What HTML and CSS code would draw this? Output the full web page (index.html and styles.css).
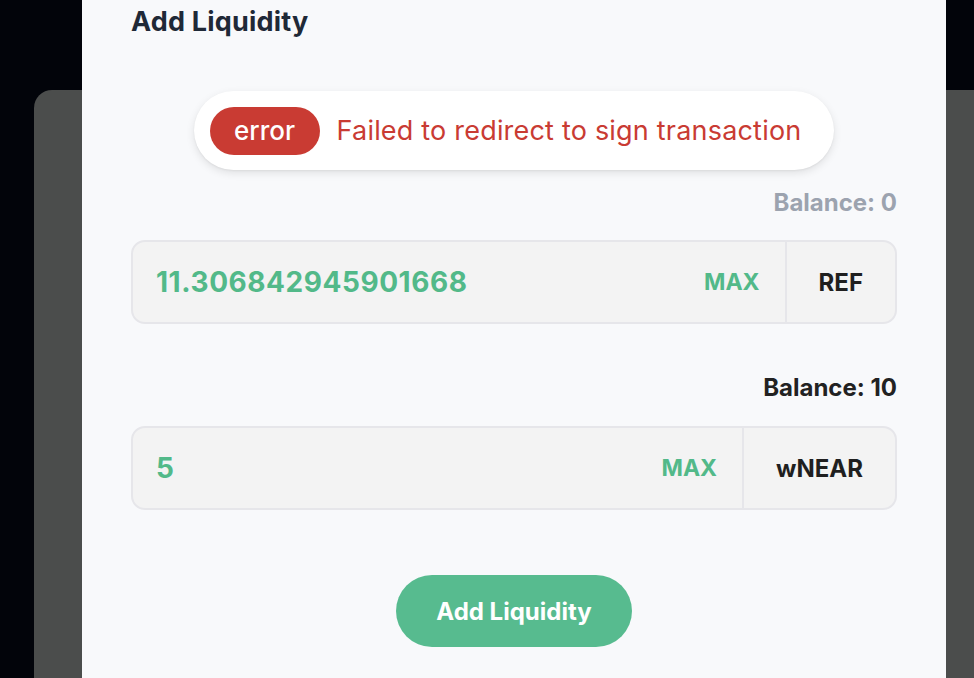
FILE: index.html
```html
<!DOCTYPE html>
<html lang="en">
<head>
<meta charset="utf-8">
<title>Add Liquidity</title>
<link rel="stylesheet" href="styles.css">
</head>
<body>
  <div class="backdrop-panel"></div>
  <div class="modal">
    <h2 class="title">Add Liquidity</h2>
    <div class="toast">
      <span class="toast-badge">error</span>
      <span class="toast-msg">Failed to redirect to sign transaction</span>
    </div>
    <div class="balance muted">Balance: 0</div>
    <div class="field">
      <span class="amount">11.306842945901668</span>
      <span class="max">MAX</span>
      <span class="token">REF</span>
    </div>
    <div class="balance balance-second">Balance: 10</div>
    <div class="field">
      <span class="amount">5</span>
      <span class="max">MAX</span>
      <span class="token">wNEAR</span>
    </div>
    <div class="actions">
      <button class="submit">Add Liquidity</button>
    </div>
  </div>
</body>
</html>
```

FILE: styles.css
```css
* { box-sizing: border-box; }
html, body {
  margin: 0;
  padding: 0;
  width: 974px;
  height: 678px;
  overflow: hidden;
  background: #02040a;
  font-family: Inter, "Noto Sans", "Liberation Sans", sans-serif;
}
.backdrop-panel {
  position: absolute;
  left: 34px;
  top: 90px;
  width: 940px;
  height: 588px;
  background: #4b4d4c;
  border-radius: 18px 0 0 0;
}
.modal {
  position: absolute;
  left: 82px;
  top: 0;
  width: 864px;
  height: 678px;
  background: #f8f9fb;
  padding: 6px 49px 0 49px;
  display: flex;
  flex-direction: column;
  overflow: hidden;
}
.title {
  margin: 0;
  font-size: 27px;
  line-height: 32px;
  font-weight: 700;
  letter-spacing: 0.2px;
  color: #1f2937;
}
.toast {
  align-self: center;
  margin-top: 53px;
  height: 79px;
  display: flex;
  align-items: center;
  gap: 17px;
  padding: 0 33px 0 16px;
  background: #ffffff;
  border-radius: 40px;
  box-shadow: 0 3px 8px rgba(0, 0, 0, 0.10), 0 1px 2px rgba(0,0,0,0.05);
}
.toast-badge {
  height: 48px;
  width: 110px;
  display: flex;
  align-items: center;
  justify-content: center;
  background: #c93b33;
  color: #ffffff;
  border-radius: 24px;
  font-size: 26px;
  font-weight: 500;
}
.toast-msg {
  color: #c93b33;
  font-size: 27px;
  font-weight: 400;
  letter-spacing: 0.2px;
}
.balance {
  margin-top: 21px;
  text-align: right;
  font-size: 24px;
  line-height: 24px;
  font-weight: 700;
  color: #222222;
}
.balance.muted { color: #9ca3af; }
.balance-second { margin-top: 52px; }
.field {
  margin-top: 25px;
  height: 84px;
  display: flex;
  align-items: stretch;
  background: #f3f3f3;
  border: 2px solid #e6e6ea;
  border-radius: 14px;
}
.balance-second + .field { margin-top: 26px; }
.amount {
  flex: 1;
  display: flex;
  align-items: center;
  padding-left: 23px;
  color: #52b989;
  font-size: 28px;
  font-weight: 700;
  letter-spacing: 0.55px;
}
.max {
  display: flex;
  align-items: center;
  padding-right: 25px;
  color: #52b989;
  font-size: 23px;
  font-weight: 700;
}
.token {
  display: flex;
  align-items: center;
  padding: 0 32px;
  border-left: 2px solid #e6e6ea;
  color: #1f1f1f;
  font-size: 24px;
  font-weight: 700;
}
.actions {
  margin-top: 65px;
  display: flex;
  justify-content: center;
}
.submit {
  width: 236px;
  height: 72px;
  border: none;
  border-radius: 36px;
  background: #57bb8f;
  color: #ffffff;
  font-family: inherit;
  font-size: 24px;
  font-weight: 700;
}
```
